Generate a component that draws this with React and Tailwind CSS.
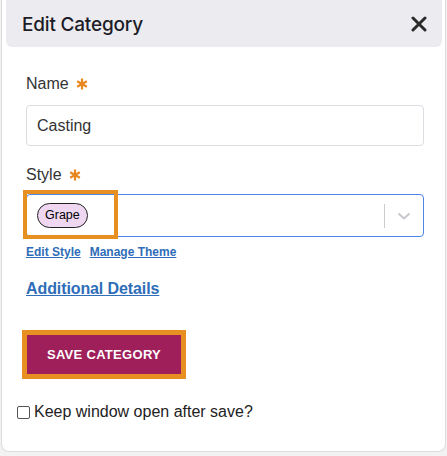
import React from 'react';

function Asterisk() {
  return (
    <svg width="12" height="12" viewBox="0 0 12 12" className="ml-[7px]">
      <g stroke="#e8861f" strokeWidth="2.2" strokeLinecap="butt">
        <path d="M6 0.5V11.5" />
        <path d="M1.2 3.2L10.8 8.8" />
        <path d="M10.8 3.2L1.2 8.8" />
      </g>
    </svg>
  );
}

function Label({ children }) {
  return (
    <div className="flex items-center h-6 text-[16px] text-[#333]">
      <span>{children}</span>
      <Asterisk />
    </div>
  );
}

export default function App() {
  return (
    <div className="w-[447px] h-[456px] bg-[#f2f2f2] font-['Liberation_Sans',Arial,sans-serif]">
      <div className="ml-px w-[445px] h-[452px] bg-white border-l border-b border-r border-[#dcdcdc] rounded-b-lg flex flex-col">
        <div className="ml-[4px] mr-[3px] h-[47px] bg-[#ececf0] rounded-b-md flex items-center justify-between pl-[16px] pr-[15px]">
          <span className="pt-[3px] font-['Inter',sans-serif] text-[19px] font-medium text-[#1c1c28] tracking-[-0.2px]">Edit Category</span>
          <svg width="16" height="16" viewBox="0 0 16 16" className="mt-px">
            <path d="M2 2L14 14M14 2L2 14" stroke="#2a2a2a" strokeWidth="3" strokeLinecap="round" />
          </svg>
        </div>

        <div className="px-6 pt-[25px] flex flex-col">
          <Label>Name</Label>
          <div className="mt-[9px] h-[41px] w-[398px] border border-[#dcdce2] rounded-[4px] flex items-center px-[10px] text-[16px] text-[#333]">
            Casting
          </div>

          <div className="mt-[17px]">
            <Label>Style</Label>
          </div>
          <div className="relative mt-[7px] h-[43px] w-[398px] border border-[#4d86e8] rounded-[4px] flex items-center">
            <div className="absolute left-[-4px] top-[-5px] w-[95px] h-[49px] border-[4px] border-[#e88f22]" />
            <span className="ml-[10px] h-[25px] px-[7px] rounded-full border border-[#222] bg-[#efd6f1] text-[12.5px] text-black flex items-center">
              Grape
            </span>
            <div className="ml-auto w-px h-[24px] bg-[#cccccc]" />
            <svg width="14" height="8" viewBox="0 0 14 8" className="mx-[12px]">
              <path d="M1.5 1.5L7 6.5L12.5 1.5" fill="none" stroke="#c8c8cc" strokeWidth="2" />
            </svg>
          </div>

          <div className="mt-[6px] flex gap-[9px] text-[12px] font-bold text-[#2f6db8] underline">
            <span>Edit Style</span>
            <span>Manage Theme</span>
          </div>

          <div className="mt-[16px] text-[16px] font-bold text-[#2f6db8] underline tracking-[-0.1px]">
            Additional Details
          </div>

          <div className="mt-[29px] ml-[-4px] w-[164px] h-[49px] bg-[#e88f22] p-[5px]">
            <div className="w-full h-full bg-[#9e1f59] flex items-center justify-center text-white text-[13px] font-bold tracking-[0.3px]">
              SAVE CATEGORY
            </div>
          </div>
        </div>

        <label className="mt-[21px] ml-[15px] flex items-center text-[16px] text-[#222]">
          <span className="w-[13px] h-[13px] border border-[#555] rounded-[2px] bg-white mr-[4px]" />
          Keep window open after save?
        </label>
      </div>
    </div>
  );
}
